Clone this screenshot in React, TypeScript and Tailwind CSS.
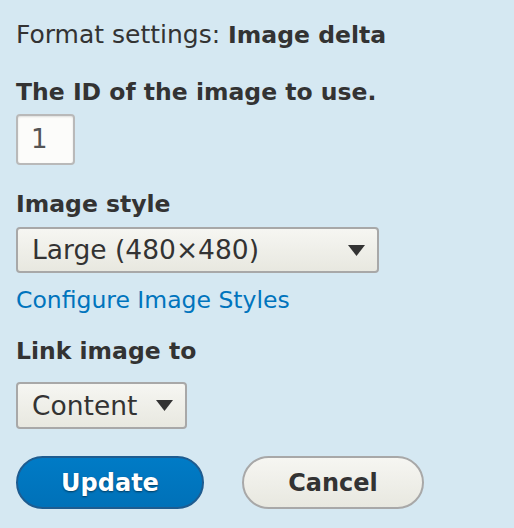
import React from "react";

function Arrow() {
  return (
    <svg width="17" height="11" viewBox="0 0 17 11" className="shrink-0">
      <polygon points="0,0 17,0 8.5,11" fill="#333" />
    </svg>
  );
}

export default function App() {
  return (
    <div
      className="w-[514px] h-[528px] bg-[#d5e8f2] text-[#333] pl-4 flex flex-col text-[24px]"
      style={{ fontFamily: '"DejaVu Sans", sans-serif' }}
    >
      <div className="pt-[20px] leading-[30px] text-[25px]">
        Format settings: <span className="font-bold text-[23.5px]">Image delta</span>
      </div>
      <div className="mt-[27px] leading-[30px] font-bold text-[23.5px]">The ID of the image to use.</div>
      <div className="mt-[7px] w-[59px] h-[51px] rounded-[4px] border-2 border-[#b9b9b9] bg-[#fcfcfa] shadow-[inset_0_1px_2px_rgba(0,0,0,0.12)] flex items-center pl-[13px] text-[#555] text-[26px]">
        1
      </div>
      <div className="mt-[24px] leading-[30px] font-bold text-[23.5px]">Image style</div>
      <div className="mt-[8px] w-[363px] h-[46px] rounded-[4px] border-2 border-[#a8a8a8] bg-gradient-to-b from-[#f6f6f2] to-[#e8e8e0] flex items-center justify-between pl-[14px] pr-[12px] text-[26.5px]">
        <span>Large (480×480)</span>
        <Arrow />
      </div>
      <div className="mt-[12px] leading-[30px] text-[#0074bd] text-[23.5px]">Configure Image Styles</div>
      <div className="mt-[21px] leading-[30px] font-bold text-[23.5px]">Link image to</div>
      <div className="mt-[16px] w-[171px] h-[47px] rounded-[4px] border-2 border-[#a8a8a8] bg-gradient-to-b from-[#f6f6f2] to-[#e8e8e0] flex items-center justify-between pl-[14px] pr-[12px] text-[26.5px]">
        <span>Content</span>
        <Arrow />
      </div>
      <div className="mt-[27px] flex gap-[38px]">
        <button
          className="w-[188px] h-[53px] rounded-full border-2 border-[#1e5c90] bg-gradient-to-b from-[#007bc6] to-[#0071b8] text-white font-bold text-[24px]"
          style={{ textShadow: "0 1px 2px rgba(0,0,0,0.5)" }}
        >
          Update
        </button>
        <button className="w-[182px] h-[53px] rounded-full border-2 border-[#a8a8a8] bg-gradient-to-b from-[#f6f6f2] to-[#e8e8e0] text-[#333] font-bold text-[24px]">
          Cancel
        </button>
      </div>
    </div>
  );
}
